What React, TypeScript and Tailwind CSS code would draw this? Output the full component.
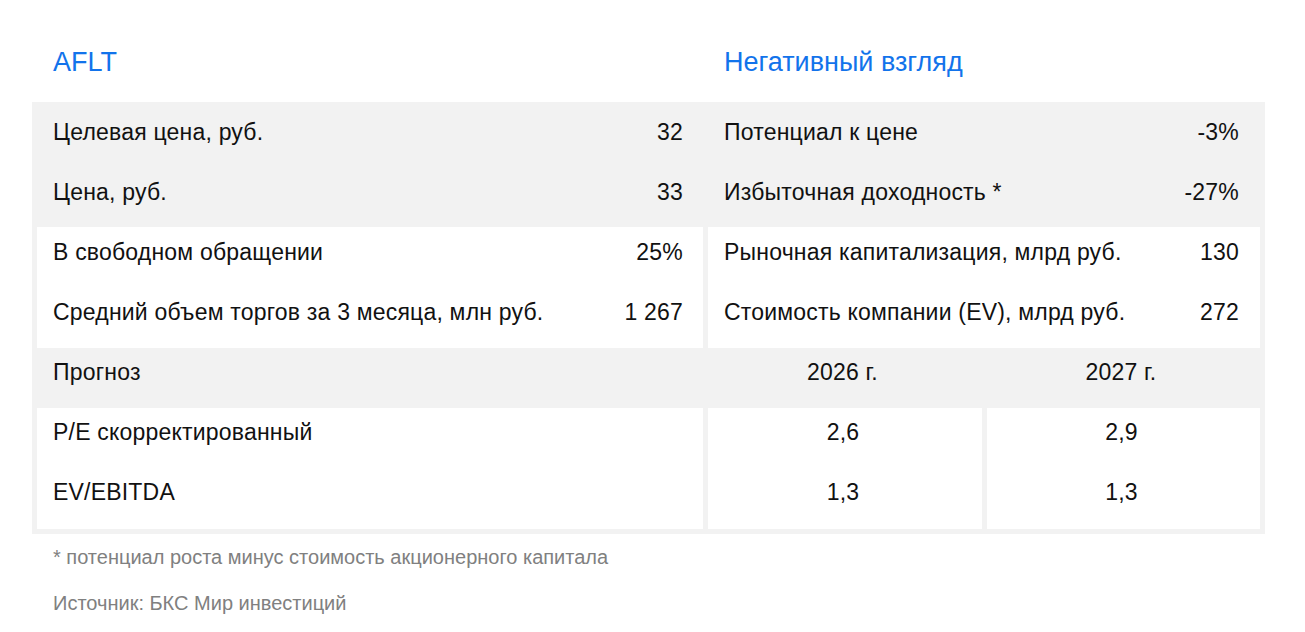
import React from "react";

const font = { fontFamily: '"Liberation Sans", Arial, sans-serif' };

function Pair({ label, value }: { label: string; value: string }) {
  return (
    <div className="flex h-[60px] items-center justify-between">
      <span>{label}</span>
      <span>{value}</span>
    </div>
  );
}

export default function App() {
  return (
    <div className="w-[1305px] h-[632px] bg-white text-[23px] tracking-[0.2px] text-[#111]" style={font}>
      <div className="pl-[32px] pt-[26px] w-[1265px]">
        <div className="flex h-[76px] items-center pb-[4px] text-[27px] tracking-normal text-[#1273eb]">
          <div className="w-[671px] pl-[21px]">AFLT</div>
          <div className="pl-[21px]">Негативный взгляд</div>
        </div>
        <div className="bg-[#f2f2f2] w-[1233px] px-[5px] pb-[5px]">
          <div className="flex h-[120px]">
            <div className="w-[666px] pl-[16px] pr-[20px] flex flex-col">
              <Pair label="Целевая цена, руб." value="32" />
              <Pair label="Цена, руб." value="33" />
            </div>
            <div className="w-[552px] ml-[5px] pl-[16px] pr-[21px] flex flex-col">
              <Pair label="Потенциал к цене" value="-3%" />
              <Pair label="Избыточная доходность *" value="-27%" />
            </div>
          </div>
          <div className="flex gap-[5px] mt-[5px]">
            <div className="w-[666px] h-[121px] bg-white pl-[16px] pr-[20px] flex flex-col">
              <div className="flex h-[50px] items-center justify-between">
                <span>В свободном обращении</span>
                <span>25%</span>
              </div>
              <div className="flex h-[70px] items-center justify-between">
                <span>Средний объем торгов за 3 месяца, млн руб.</span>
                <span>1 267</span>
              </div>
            </div>
            <div className="w-[552px] h-[121px] bg-white pl-[16px] pr-[21px] flex flex-col">
              <div className="flex h-[50px] items-center justify-between">
                <span>Рыночная капитализация, млрд руб.</span>
                <span>130</span>
              </div>
              <div className="flex h-[70px] items-center justify-between">
                <span>Стоимость компании (EV), млрд руб.</span>
                <span>272</span>
              </div>
            </div>
          </div>
          <div className="flex h-[60px]">
            <div className="w-[666px] pl-[16px] pt-[7px]">Прогноз</div>
            <div className="w-[274px] ml-[5px] text-center pr-[5px] pt-[7px]">2026 г.</div>
            <div className="w-[273px] ml-[5px] text-center pr-[5px] pt-[7px]">2027 г.</div>
          </div>
          <div className="flex gap-[5px]">
            <div className="w-[666px] h-[121px] bg-white pl-[16px] flex flex-col">
              <div className="flex h-[48px] items-center">P/E скорректированный</div>
              <div className="flex h-[72px] items-center">EV/EBITDA</div>
            </div>
            <div className="w-[274px] h-[121px] bg-white flex flex-col pr-[4px]">
              <div className="flex h-[48px] items-center justify-center">2,6</div>
              <div className="flex h-[72px] items-center justify-center">1,3</div>
            </div>
            <div className="w-[273px] h-[121px] bg-white flex flex-col pr-[4px]">
              <div className="flex h-[48px] items-center justify-center">2,9</div>
              <div className="flex h-[72px] items-center justify-center">1,3</div>
            </div>
          </div>
        </div>
        <div className="pl-[21px] text-[20px] tracking-normal text-[#808080]">
          <div className="h-[46px] flex items-center">* потенциал роста минус стоимость акционерного капитала</div>
          <div className="h-[46px] flex items-center">Источник: БКС Мир инвестиций</div>
        </div>
      </div>
    </div>
  );
}
